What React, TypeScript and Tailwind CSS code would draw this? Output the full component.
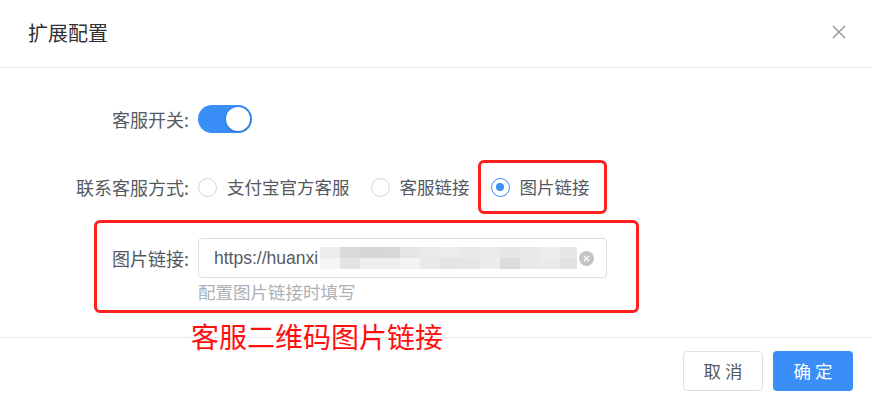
import React from "react";

const FONT = '"Noto Sans CJK SC", "Noto Sans", sans-serif';

// pixelated blur that hides the rest of the url
const BLUR_COLS = [
  { w: 20, top: "#ececec", bottom: "#f5f5f5" },
  { w: 20, top: "#d9d9d9", bottom: "#e3e3e3" },
  { w: 20, top: "#d6d6d6", bottom: "#eeeeee" },
  { w: 20, top: "#d7d7d7", bottom: "#eeeeee" },
  { w: 20, top: "#e5e5e5", bottom: "#f3f3f3" },
  { w: 20, top: "#eaeaea", bottom: "#e9e9e9" },
  { w: 20, top: "#ececec", bottom: "#e4e4e4" },
  { w: 20, top: "#e9e9e9", bottom: "#e6e6e6" },
  { w: 20, top: "#ebebeb", bottom: "#ececec" },
  { w: 20, top: "#e6e6e6", bottom: "#dcdcdc" },
  { w: 20, top: "#e9e9e9", bottom: "#e8e8e8" },
  { w: 20, top: "#eeeeee", bottom: "#eaeaea" },
  { w: 18, top: "#e7e7e7", bottom: "#e1e1e1" },
];

function Radio({ label, checked }: { label: string; checked?: boolean }) {
  return (
    <label className="flex items-center mr-[21px]">
      <span
        className={
          checked
            ? "w-[19px] h-[19px] rounded-full border-[1.5px] border-[#3a8ef7] flex items-center justify-center"
            : "w-[19px] h-[19px] rounded-full border border-[#d3d6dc] bg-white"
        }
      >
        {checked && <span className="w-[8px] h-[8px] rounded-full bg-[#3a8ef7]" />}
      </span>
      <span className="ml-[10px] text-[17.5px] text-[#555a62]">{label}</span>
    </label>
  );
}

export default function App() {
  return (
    <div
      className="relative w-[872px] h-[401px] bg-white overflow-hidden"
      style={{ fontFamily: FONT }}
    >
      {/* header */}
      <div className="h-[68px] border-b border-[#ebebeb] flex items-center justify-between pl-[28px] pr-[26px] pb-[1px]">
        <span className="text-[20px] text-[#303133]">扩展配置</span>
        <svg width="14" height="14" viewBox="0 0 14 14" className="-mt-[2px]">
          <path d="M1 1 L13 13 M13 1 L1 13" stroke="#8f8f8f" strokeWidth="1.3" />
        </svg>
      </div>

      {/* body */}
      <div className="h-[269px] pt-[31px]">
        <div className="flex items-center h-[40px]">
          <div className="w-[198px] pr-[9px] text-right text-[18px] text-[#555a62]">客服开关:</div>
          <div className="w-[54px] h-[28px] rounded-full bg-[#3a8ef7] flex items-center justify-end px-[2px]">
            <span className="w-[24px] h-[24px] rounded-full bg-white shadow-[0_1px_3px_rgba(0,0,0,0.25)]" />
          </div>
        </div>

        <div className="flex items-center h-[40px] mt-[28px]">
          <div className="w-[198px] pr-[9px] text-right text-[18px] text-[#555a62]">联系客服方式:</div>
          <Radio label="支付宝官方客服" />
          <Radio label="客服链接" />
          <Radio label="图片链接" checked />
        </div>

        <div className="flex mt-[31px]">
          <div className="w-[198px] h-[40px] leading-[40px] pr-[9px] text-right text-[18px] text-[#555a62]">图片链接:</div>
          <div>
            <div className="w-[409px] h-[40px] border border-[#dcdfe6] rounded-[4px] flex items-center pl-[15px] pr-[12px]">
              <span className="text-[17.5px] text-[#555a62] whitespace-nowrap font-['Liberation_Sans',sans-serif]">
                https://huanxi
              </span>
              <div className="flex h-[22px] flex-1 overflow-hidden ml-[2px]">
                {BLUR_COLS.map((c, i) => (
                  <div key={i} className="flex flex-col shrink-0" style={{ width: c.w }}>
                    <div className="h-[11px]" style={{ background: c.top }} />
                    <div className="h-[11px]" style={{ background: c.bottom }} />
                  </div>
                ))}
              </div>
              <span className="ml-[2px] w-[15px] h-[15px] rounded-full bg-[#c2c4c8] flex items-center justify-center shrink-0">
                <svg width="7" height="7" viewBox="0 0 7 7">
                  <path d="M1 1 L6 6 M6 1 L1 6" stroke="#fff" strokeWidth="1.2" />
                </svg>
              </span>
            </div>
            <div className="mt-[3px] h-[22px] leading-[22px] text-[17.5px] text-[#aeb1b6]">配置图片链接时填写</div>
          </div>
        </div>
      </div>

      {/* footer */}
      <div className="border-t border-[#ebebeb] flex justify-end gap-[10px] pt-[13px] pr-[19px]">
        <button className="w-[80px] h-[40px] rounded-[4px] border border-[#dcdfe6] bg-white text-[17.5px] text-[#555a62] tracking-[4px] pl-[4px]">
          取消
        </button>
        <button className="w-[80px] h-[40px] rounded-[4px] bg-[#3a8ef7] text-[17.5px] text-white tracking-[4px] pl-[4px]">
          确定
        </button>
      </div>

      {/* annotations */}
      <div className="absolute left-[478px] top-[160px] w-[129px] h-[54px] border-[3px] border-[#ff1f1f] rounded-[6px]" />
      <div className="absolute left-[94px] top-[220px] w-[545px] h-[93px] border-[3px] border-[#ff1f1f] rounded-[6px]" />
      <div className="absolute left-[191px] top-[318px] text-[28px] leading-[36px] text-[#ff1010]">
        客服二维码图片链接
      </div>
    </div>
  );
}
